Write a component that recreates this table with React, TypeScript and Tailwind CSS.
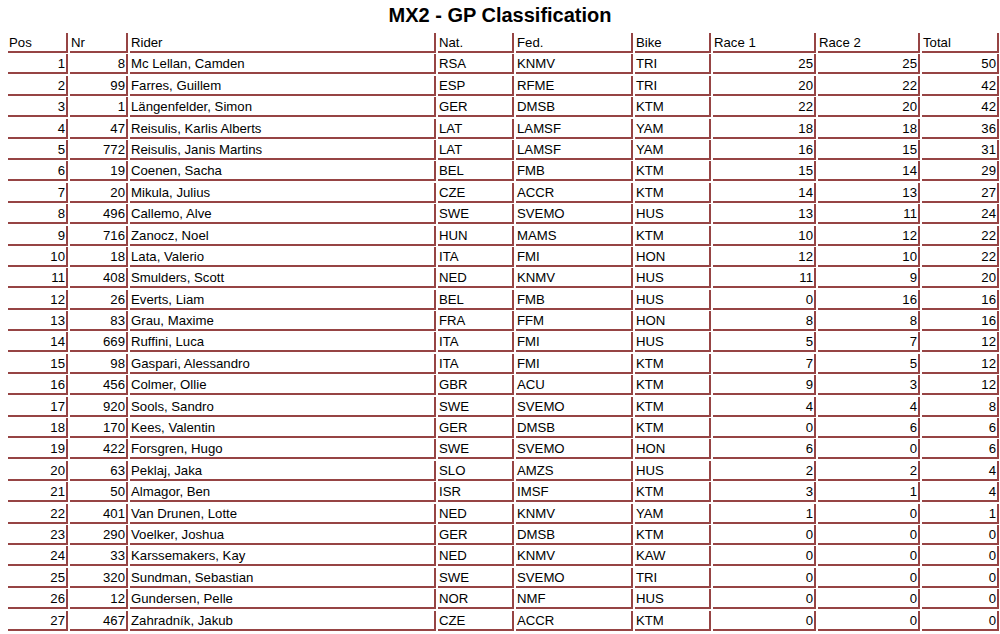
import React from "react";

const rows: [number, number, string, string, string, string, number, number, number][] = [
  [1, 8, "Mc Lellan, Camden", "RSA", "KNMV", "TRI", 25, 25, 50],
  [2, 99, "Farres, Guillem", "ESP", "RFME", "TRI", 20, 22, 42],
  [3, 1, "Längenfelder, Simon", "GER", "DMSB", "KTM", 22, 20, 42],
  [4, 47, "Reisulis, Karlis Alberts", "LAT", "LAMSF", "YAM", 18, 18, 36],
  [5, 772, "Reisulis, Janis Martins", "LAT", "LAMSF", "YAM", 16, 15, 31],
  [6, 19, "Coenen, Sacha", "BEL", "FMB", "KTM", 15, 14, 29],
  [7, 20, "Mikula, Julius", "CZE", "ACCR", "KTM", 14, 13, 27],
  [8, 496, "Callemo, Alve", "SWE", "SVEMO", "HUS", 13, 11, 24],
  [9, 716, "Zanocz, Noel", "HUN", "MAMS", "KTM", 10, 12, 22],
  [10, 18, "Lata, Valerio", "ITA", "FMI", "HON", 12, 10, 22],
  [11, 408, "Smulders, Scott", "NED", "KNMV", "HUS", 11, 9, 20],
  [12, 26, "Everts, Liam", "BEL", "FMB", "HUS", 0, 16, 16],
  [13, 83, "Grau, Maxime", "FRA", "FFM", "HON", 8, 8, 16],
  [14, 669, "Ruffini, Luca", "ITA", "FMI", "HUS", 5, 7, 12],
  [15, 98, "Gaspari, Alessandro", "ITA", "FMI", "KTM", 7, 5, 12],
  [16, 456, "Colmer, Ollie", "GBR", "ACU", "KTM", 9, 3, 12],
  [17, 920, "Sools, Sandro", "SWE", "SVEMO", "KTM", 4, 4, 8],
  [18, 170, "Kees, Valentin", "GER", "DMSB", "KTM", 0, 6, 6],
  [19, 422, "Forsgren, Hugo", "SWE", "SVEMO", "HON", 6, 0, 6],
  [20, 63, "Peklaj, Jaka", "SLO", "AMZS", "HUS", 2, 2, 4],
  [21, 50, "Almagor, Ben", "ISR", "IMSF", "KTM", 3, 1, 4],
  [22, 401, "Van Drunen, Lotte", "NED", "KNMV", "YAM", 1, 0, 1],
  [23, 290, "Voelker, Joshua", "GER", "DMSB", "KTM", 0, 0, 0],
  [24, 33, "Karssemakers, Kay", "NED", "KNMV", "KAW", 0, 0, 0],
  [25, 320, "Sundman, Sebastian", "SWE", "SVEMO", "TRI", 0, 0, 0],
  [26, 12, "Gundersen, Pelle", "NOR", "NMF", "HUS", 0, 0, 0],
  [27, 467, "Zahradník, Jakub", "CZE", "ACCR", "KTM", 0, 0, 0],
];

const headers = ["Pos", "Nr", "Rider", "Nat.", "Fed.", "Bike", "Race 1", "Race 2", "Total"];
const rightAligned = [true, true, false, false, false, false, true, true, true];

export default function App() {
  return (
    <div
      className="w-[1000px] h-[634px] bg-white text-black overflow-hidden"
      style={{ fontFamily: '"Liberation Sans", Arial, sans-serif' }}
    >
      <h1 className="text-[20px] font-bold text-center leading-[24px] pt-[3px] h-[33px]">
        MX2 - GP Classification
      </h1>
      <div className="ml-[8px] w-[991px] grid grid-cols-[60px_58px_306px_76px_117px_76px_103px_102px_77px] gap-x-[2px] gap-y-[1.4px] text-[13.2px] leading-[18px]">
        {headers.map((h) => (
          <div
            key={h}
            className="h-[20px] border-r-2 border-b-2 border-[#964444] pl-[1px] pt-[1px]"
          >
            {h}
          </div>
        ))}
        {rows.map((r) =>
          r.map((v, i) => (
            <div
              key={`${r[0]}-${i}`}
              className={`h-[20px] border-r-2 border-b-2 border-[#964444] pt-[1px] ${
                rightAligned[i] ? "text-right pr-[1px]" : "text-left pl-[1px]"
              }`}
            >
              {v}
            </div>
          ))
        )}
      </div>
    </div>
  );
}
